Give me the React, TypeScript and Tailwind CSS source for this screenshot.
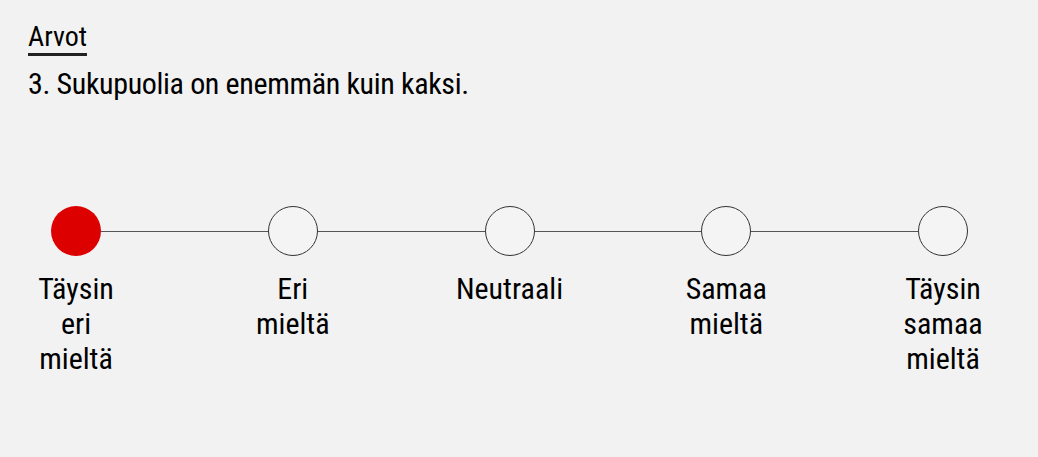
import React from "react";

const options = [
  { label: "Täysin eri mieltä", selected: true },
  { label: "Eri mieltä", selected: false },
  { label: "Neutraali", selected: false },
  { label: "Samaa mieltä", selected: false },
  { label: "Täysin samaa mieltä", selected: false },
];

const font = { fontFamily: 'Roboto, "Open Sans", "Liberation Sans", sans-serif', fontStretch: "75%" };

export default function App() {
  return (
    <div className="w-[1038px] h-[457px] bg-[#f2f2f2] text-black overflow-hidden" style={font}>
      <div className="pl-[28px] pt-[23px]">
        <div className="inline-block text-[28px] leading-[28px] border-b-[3px] border-[#222] pb-[2px]">Arvot</div>
        <h1 className="mt-[10px] text-[30px] leading-[36px] tracking-[-0.35px] font-normal">
          3. Sukupuolia on enemmän kuin kaksi.
        </h1>
      </div>

      <div className="mt-[104px] ml-[51px] w-[917px] flex items-start">
        {options.map((o, i) => (
          <React.Fragment key={o.label}>
            {i > 0 && <div className="flex-1 h-px bg-[#555] mt-[25px]" />}
            <div className="w-[50px] flex flex-col items-center">
              <button
                type="button"
                aria-pressed={o.selected}
                className={
                  o.selected
                    ? "w-[50px] h-[50px] rounded-full bg-[#dd0000] shrink-0"
                    : "w-[50px] h-[50px] rounded-full bg-[#f4f4f4] border border-[#333] shrink-0"
                }
              />
              <div className="mt-[15px] w-min text-center text-[30px] leading-[35px]">{o.label}</div>
            </div>
          </React.Fragment>
        ))}
      </div>
    </div>
  );
}
